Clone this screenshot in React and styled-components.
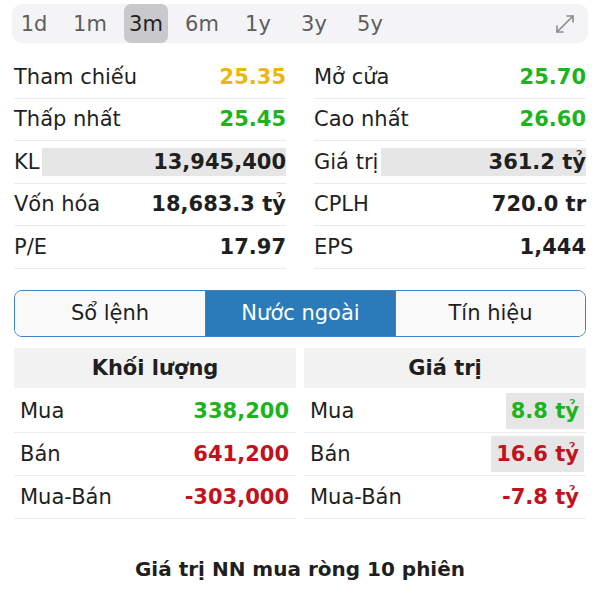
import React from 'react';
import styled, { createGlobalStyle } from 'styled-components';

const GlobalStyle = createGlobalStyle`
  body {
    margin: 0;
    background: #fff;
    font-family: 'DejaVu Sans', 'Liberation Sans', sans-serif;
    color: #1f1f1f;
  }
`;

const tone = {
  ref: '#ecb612',
  up: '#1cb41c',
  down: '#c4111b',
  plain: '#1f1f1f',
};

const PeriodBar = styled.div`
  display: flex;
  align-items: center;
  gap: 12px;
  height: 39px;
  margin: 4px 12px 0;
  padding-right: 13px;
  background: #f4f4f6;
  border-radius: 10px;
`;

const Period = styled.div`
  width: 44px;
  height: 100%;
  display: flex;
  align-items: center;
  justify-content: center;
  font-size: 21px;
  color: ${(p) => (p.$active ? '#1f1f1f' : '#5e5e5e')};
  background: ${(p) => (p.$active ? '#c9c9cb' : 'transparent')};
  border-radius: 7px;
`;

const ExpandBtn = styled.div`
  margin-left: auto;
  display: flex;
  color: #8a8a8a;
`;

const StatsGrid = styled.div`
  display: grid;
  grid-template-columns: 1fr 1fr;
  column-gap: 28px;
  margin-top: 13px;
  padding: 0 14px;
`;

const StatRow = styled.div`
  display: flex;
  align-items: center;
  height: 42.5px;
  box-sizing: border-box;
  border-bottom: 1px solid #ebebeb;
  font-size: 21px;
`;

const Label = styled.span`
  white-space: nowrap;
`;

const StatValue = styled.span`
  flex: 1;
  height: 28px;
  line-height: 28px;
  margin-left: 3px;
  text-align: right;
  font-weight: bold;
  white-space: nowrap;
  color: ${(p) => tone[p.$tone || 'plain']};
  background: ${(p) => (p.$hl ? '#e6e6e6' : 'transparent')};
`;

const Segmented = styled.div`
  display: grid;
  grid-template-columns: repeat(3, 1fr);
  height: 47px;
  margin: 21px 14px 0;
  box-sizing: border-box;
  border: 1.5px solid #3b83c1;
  border-radius: 8px;
  overflow: hidden;
`;

const Segment = styled.div`
  display: flex;
  align-items: center;
  justify-content: center;
  font-size: 21px;
  color: ${(p) => (p.$active ? '#fff' : '#1f1f1f')};
  background: ${(p) => (p.$active ? '#2b7bbb' : '#fafafa')};

  & + & {
    border-left: 1px solid #3b83c1;
  }
`;

const ForeignGrid = styled.div`
  display: grid;
  grid-template-columns: 1fr 1fr;
  column-gap: 8px;
  margin: 11px 14px 0;
`;

const TableHead = styled.div`
  height: 40px;
  margin-bottom: 2px;
  display: flex;
  align-items: center;
  justify-content: center;
  background: #f2f2f2;
  font-size: 21px;
  font-weight: bold;
`;

const TableRow = styled.div`
  display: flex;
  align-items: center;
  justify-content: space-between;
  height: 43px;
  box-sizing: border-box;
  padding: 0 2px 0 6px;
  border-bottom: 1px solid #ececec;
  font-size: 21px;
`;

const CellValue = styled.span`
  height: 36px;
  line-height: 36px;
  padding: 0 5px;
  font-weight: bold;
  white-space: nowrap;
  color: ${(p) => tone[p.$tone || 'plain']};
  background: ${(p) => (p.$hl ? '#e6e6e6' : 'transparent')};
`;

const Title = styled.div`
  margin-top: 38px;
  text-align: center;
  font-size: 20px;
  line-height: 24px;
  font-weight: bold;
`;

const periods = ['1d', '1m', '3m', '6m', '1y', '3y', '5y'];

const stats = [
  [
    { label: 'Tham chiếu', value: '25.35', tone: 'ref' },
    { label: 'Thấp nhất', value: '25.45', tone: 'up' },
    { label: 'KL', value: '13,945,400', hl: true },
    { label: 'Vốn hóa', value: '18,683.3 tỷ' },
    { label: 'P/E', value: '17.97' },
  ],
  [
    { label: 'Mở cửa', value: '25.70', tone: 'up' },
    { label: 'Cao nhất', value: '26.60', tone: 'up' },
    { label: 'Giá trị', value: '361.2 tỷ', hl: true },
    { label: 'CPLH', value: '720.0 tr' },
    { label: 'EPS', value: '1,444' },
  ],
];

const foreign = [
  {
    title: 'Khối lượng',
    rows: [
      { label: 'Mua', value: '338,200', tone: 'up' },
      { label: 'Bán', value: '641,200', tone: 'down' },
      { label: 'Mua-Bán', value: '-303,000', tone: 'down' },
    ],
  },
  {
    title: 'Giá trị',
    rows: [
      { label: 'Mua', value: '8.8 tỷ', tone: 'up', hl: true },
      { label: 'Bán', value: '16.6 tỷ', tone: 'down', hl: true },
      { label: 'Mua-Bán', value: '-7.8 tỷ', tone: 'down' },
    ],
  },
];

const ExpandIcon = () => (
  <svg width="20" height="20" viewBox="0 0 20 20" fill="none" stroke="currentColor" strokeWidth="1.6" strokeLinecap="round" strokeLinejoin="round">
    <path d="M2 18 18 2" />
    <path d="M12 2h6v6" />
    <path d="M2 12v6h6" />
  </svg>
);

const App = () => {
  return (
    <>
      <GlobalStyle />
      <PeriodBar>
        {periods.map((p) => (
          <Period key={p} $active={p === '3m'}>
            {p}
          </Period>
        ))}
        <ExpandBtn>
          <ExpandIcon />
        </ExpandBtn>
      </PeriodBar>

      <StatsGrid>
        {stats.map((col, i) => (
          <div key={i}>
            {col.map((s) => (
              <StatRow key={s.label}>
                <Label>{s.label}</Label>
                <StatValue $tone={s.tone} $hl={s.hl}>
                  {s.value}
                </StatValue>
              </StatRow>
            ))}
          </div>
        ))}
      </StatsGrid>

      <Segmented>
        <Segment>Sổ lệnh</Segment>
        <Segment $active>Nước ngoài</Segment>
        <Segment>Tín hiệu</Segment>
      </Segmented>

      <ForeignGrid>
        {foreign.map((t) => (
          <div key={t.title}>
            <TableHead>{t.title}</TableHead>
            {t.rows.map((r) => (
              <TableRow key={r.label}>
                <Label>{r.label}</Label>
                <CellValue $tone={r.tone} $hl={r.hl}>
                  {r.value}
                </CellValue>
              </TableRow>
            ))}
          </div>
        ))}
      </ForeignGrid>

      <Title>Giá trị NN mua ròng 10 phiên</Title>
    </>
  );
};

export default App;
